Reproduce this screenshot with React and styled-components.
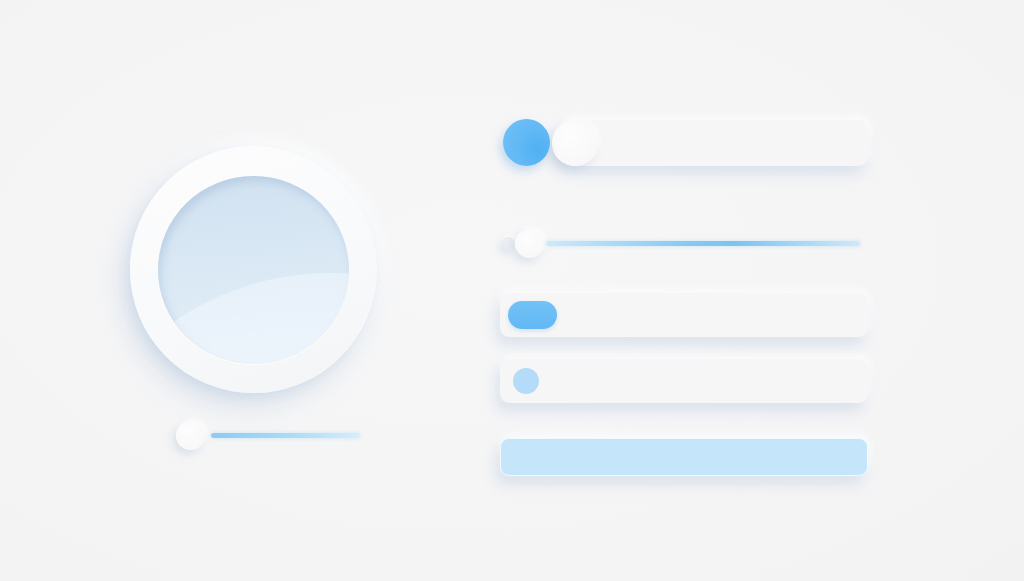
import styled, { createGlobalStyle } from "styled-components";

const GlobalStyle = createGlobalStyle`
  html, body {
    margin: 0;
    padding: 0;
    background: #f4f4f5;
    font-family: "Inter", "Liberation Sans", sans-serif;
  }
`;

const Page = styled.div`
  width: 1024px;
  height: 581px;
  box-sizing: border-box;
  display: flex;
  align-items: flex-start;
  gap: 123px;
  padding: 119px 0 0 130px;
  background: radial-gradient(ellipse at 45% 45%, #f7f7f8 0%, #f4f4f5 70%, #f2f2f3 100%);
  overflow: hidden;
`;

const LeftColumn = styled.div`
  display: flex;
  flex-direction: column;
  align-items: flex-start;
  padding-top: 27px;
  gap: 28px;
`;

const Dial = styled.div`
  width: 247px;
  height: 247px;
  border-radius: 50%;
  display: flex;
  align-items: center;
  justify-content: center;
  background: linear-gradient(160deg, #fdfdfe 0%, #f8f9fa 60%, #f3f4f6 100%);
  box-shadow:
    -8px 12px 26px rgba(160, 185, 215, 0.35),
    -3px 4px 8px rgba(180, 200, 225, 0.25),
    4px -6px 18px rgba(255, 255, 255, 0.95);
`;

const Lens = styled.div`
  position: relative;
  width: 191px;
  height: 188px;
  border-radius: 50%;
  overflow: hidden;
  background: linear-gradient(175deg, #d0e1f0 0%, #d9e8f4 45%, #e6f0f9 100%);
  box-shadow:
    inset 3px 5px 8px rgba(140, 170, 205, 0.35),
    0 1px 1px rgba(255, 255, 255, 0.9);

  &::after {
    content: "";
    position: absolute;
    left: -102px;
    top: 97px;
    width: 548px;
    height: 548px;
    border-radius: 50%;
    background: rgba(246, 250, 254, 0.45);
  }
`;

const SliderRow = styled.div`
  display: flex;
  align-items: center;
  margin-left: ${(p) => p.$offset || 0}px;
  margin-top: ${(p) => p.$top || 0}px;
`;

const Dot = styled.div`
  width: ${(p) => p.$size}px;
  height: ${(p) => p.$size}px;
  border-radius: 50%;
  flex: none;
  background: ${(p) => p.$color || "radial-gradient(circle at 40% 35%, #fdfdfd 0%, #f6f6f7 100%)"};
  box-shadow: ${(p) =>
    p.$flat
      ? "none"
      : "-3px 4px 8px rgba(165, 185, 210, 0.35), 2px -2px 5px rgba(255,255,255,0.9)"};
`;

const Track = styled.div`
  height: 5px;
  width: ${(p) => p.$width}px;
  margin-left: ${(p) => p.$gap}px;
  border-radius: 3px;
  background: ${(p) => p.$fill};
  box-shadow: 0 0 4px rgba(130, 195, 240, 0.35);
`;

const RightColumn = styled.div`
  display: flex;
  flex-direction: column;
  width: 368px;
`;

const ToggleRow = styled.div`
  display: flex;
  align-items: center;
  padding-left: 3px;
  height: 47px;
`;

const BlueKnob = styled.div`
  width: 47px;
  height: 47px;
  border-radius: 50%;
  flex: none;
  background: radial-gradient(circle at 75% 65%, #4fb0f2 0%, #62b9f4 45%, #72c1f6 100%);
  box-shadow: -3px 5px 10px rgba(110, 170, 220, 0.35);
  position: relative;
  z-index: 1;
`;

const ToggleTrack = styled.div`
  flex: 1;
  height: 46px;
  margin-left: 2px;
  border-radius: 23px 10px 10px 23px;
  background: #f6f6f7;
  display: flex;
  align-items: center;
  box-shadow:
    -4px 8px 14px rgba(170, 190, 215, 0.35),
    2px -3px 8px rgba(255, 255, 255, 0.95);
`;

const Bar = styled.div`
  height: ${(p) => p.$height}px;
  margin-top: ${(p) => p.$top}px;
  box-sizing: border-box;
  border-radius: 9px;
  display: flex;
  align-items: center;
  padding-left: ${(p) => p.$pad || 0}px;
  background: ${(p) => p.$fill || "#f6f6f7"};
  border: ${(p) => (p.$fill ? "1.5px solid #f3faff" : "none")};
  box-shadow:
    -4px 8px 14px rgba(170, 190, 215, 0.35),
    2px -3px 8px rgba(255, 255, 255, 0.95);
`;

const Pill = styled.div`
  width: 49px;
  height: 28px;
  border-radius: 14px;
  background: linear-gradient(180deg, #72c2f7 0%, #62b8f3 100%);
  box-shadow: 0 2px 4px rgba(100, 165, 220, 0.25);
`;

export default function App() {
  return (
    <>
      <GlobalStyle />
      <Page>
        <LeftColumn>
          <Dial>
            <Lens />
          </Dial>
          <SliderRow $offset={46}>
            <Dot $size={29} />
            <Track
              $width={149}
              $gap={6}
              $fill="linear-gradient(90deg, #8ccbf3 0%, #a9daf7 50%, #d6edfb 100%)"
            />
          </SliderRow>
        </LeftColumn>

        <RightColumn>
          <ToggleRow>
            <BlueKnob />
            <ToggleTrack>
              <Dot $size={46} />
            </ToggleTrack>
          </ToggleRow>

          <SliderRow $top={63} $offset={2}>
            <Dot $size={13} $color="#ebedf1" />
            <Dot $size={29} />
            <Track
              $width={314}
              $gap={2}
              $fill="linear-gradient(90deg, #cfe9fa 0%, #86c9f3 45%, #7cc3f2 60%, #cfe9fa 100%)"
            />
          </SliderRow>

          <Bar $height={44} $top={35} $pad={8}>
            <Pill />
          </Bar>

          <Bar $height={44} $top={22} $pad={13}>
            <Dot $size={26} $color="#b4dbf7" $flat />
          </Bar>

          <Bar $height={38} $top={35} $fill="#c4e5fa" />
        </RightColumn>
      </Page>
    </>
  );
}
